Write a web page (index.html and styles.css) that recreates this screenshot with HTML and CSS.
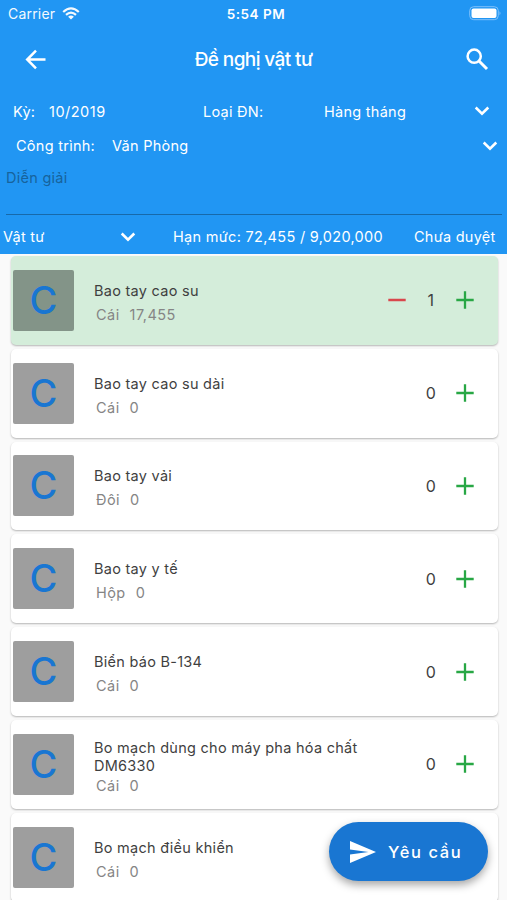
FILE: index.html
```html
<!DOCTYPE html>
<html lang="vi">
<head>
<meta charset="utf-8">
<title>Đề nghị vật tư</title>
<link rel="stylesheet" href="styles.css">
</head>
<body>
<svg width="0" height="0" class="defs">
  <symbol id="chevron" viewBox="0 0 16 10"><path d="M1.700 1.500 8 7.600l6.300-6.100" fill="none" stroke="#fff" stroke-width="2.600"/></symbol>
  <symbol id="plus" viewBox="0 0 18 18"><path d="M9 .3v17.400M.3 9h17.400" fill="none" stroke="#28a745" stroke-width="2.300"/></symbol>
  <symbol id="minus" viewBox="0 0 18 18"><path d="M.3 9h17.400" fill="none" stroke="#d9474c" stroke-width="2.500"/></symbol>
</svg>
<header class="header">
  <div class="status">
    <div class="carrier"><span>Carrier</span>
      <svg width="18" height="13" viewBox="0 0 18 13"><g fill="none" stroke="#fff" stroke-width="2.200"><path d="M1.200 5Q9-2.200 16.800 5"/><path d="M4 7.900Q9 3.300 14 7.900"/></g><path d="M9 12.500 6.100 9.700Q9 7.400 11.900 9.700Z" fill="#fff"/></svg>
    </div>
    <span class="time">5:54 PM</span>
    <svg class="battery" width="33" height="15" viewBox="0 0 33 15"><rect x=".7" y=".7" width="28.600" height="13" rx="4" fill="none" stroke="#7fc1fa" stroke-width="1"/><rect x="2.500" y="2.500" width="25" height="9.500" rx="2" fill="#fff"/><path d="M30.500 5.200q2 2 0 4Z" fill="#7fc1fa"/></svg>
  </div>
  <div class="appbar">
    <svg width="22" height="22" viewBox="0 0 22 22"><path d="M20.500 10.500H3M11 1.700 2.200 10.500l8.800 8.800" fill="none" stroke="#fff" stroke-width="2.500"/></svg>
    <h1 class="title">Đề nghị vật tư</h1>
    <svg width="23" height="23" viewBox="0 0 23 23"><circle cx="8.200" cy="8.200" r="6.600" fill="none" stroke="#fff" stroke-width="2.500"/><path d="m13 13 8 8" stroke="#fff" stroke-width="3"/></svg>
  </div>
  <div class="row period"><span class="period-label">Kỳ:</span><span class="period-value">10/2019</span><span class="type-label">Loại ĐN:</span><span class="type-value">Hàng tháng</span><svg class="chev"><use href="#chevron"/></svg></div>
  <div class="row project"><span class="project-label">Công trình:</span><span class="project-value">Văn Phòng</span><svg class="chev"><use href="#chevron"/></svg></div>
  <div class="note">Diễn giải</div>
  <div class="row summary"><span class="kind">Vật tư</span><svg class="chev"><use href="#chevron"/></svg><span class="limit">Hạn mức: 72,455 / 9,020,000</span><span class="state">Chưa duyệt</span></div>
</header>
<main class="list">
  <article class="card selected"><div class="thumb">C</div><div class="info"><div class="name">Bao tay cao su</div><div class="meta"><span>Cái</span><span>17,455</span></div></div><svg class="op"><use href="#minus"/></svg><span class="qty">1</span><svg class="op"><use href="#plus"/></svg></article>
  <article class="card"><div class="thumb">C</div><div class="info"><div class="name">Bao tay cao su dài</div><div class="meta"><span>Cái</span><span>0</span></div></div><span class="qty">0</span><svg class="op"><use href="#plus"/></svg></article>
  <article class="card"><div class="thumb">C</div><div class="info"><div class="name">Bao tay vải</div><div class="meta"><span>Đôi</span><span>0</span></div></div><span class="qty">0</span><svg class="op"><use href="#plus"/></svg></article>
  <article class="card"><div class="thumb">C</div><div class="info"><div class="name">Bao tay y tế</div><div class="meta"><span>Hộp</span><span>0</span></div></div><span class="qty">0</span><svg class="op"><use href="#plus"/></svg></article>
  <article class="card"><div class="thumb">C</div><div class="info"><div class="name">Biển báo B-134</div><div class="meta"><span>Cái</span><span>0</span></div></div><span class="qty">0</span><svg class="op"><use href="#plus"/></svg></article>
  <article class="card"><div class="thumb">C</div><div class="info long"><div class="name">Bo mạch dùng cho máy pha hóa chất<br>DM6330</div><div class="meta"><span>Cái</span><span>0</span></div></div><span class="qty">0</span><svg class="op"><use href="#plus"/></svg></article>
  <article class="card"><div class="thumb">C</div><div class="info"><div class="name">Bo mạch điều khiển</div><div class="meta"><span>Cái</span><span>0</span></div></div></article>
</main>
<button class="request"><svg width="26" height="22" viewBox="0 0 26 22"><path d="M0 0 26 11 0 22V13.500L18.500 11 0 8.500Z" fill="#fff"/></svg><span>Yêu cầu</span></button>
</body>
</html>
```
FILE: styles.css
```css
* { box-sizing: border-box; }
body {
  margin: 0;
  height: 900px;
  overflow: hidden;
  background: #fafafa;
  font-family: Inter, "Liberation Sans", sans-serif;
  font-size: 14.500px;
  letter-spacing: .27px;
  color: #3f3f3f;
}
.defs { position: absolute; }
svg { display: block; flex: none; }
span { white-space: nowrap; }
.header { height: 254px; background: #2196f3; color: #fff; }
.status {
  display: grid;
  grid-template-columns: 1fr auto 1fr;
  align-items: center;
  height: 27px;
  padding: 0 5px 0 8px;
  font-size: 14px;
}
.carrier { display: flex; align-items: center; gap: 7px; letter-spacing: .2px; opacity: .95; }
.time { padding-left: 2px; font-weight: 600; font-size: 13.500px; letter-spacing: .55px; }
.battery { justify-self: end; }
.appbar {
  display: flex;
  align-items: center;
  justify-content: space-between;
  height: 65px;
  padding: 0 18px 0 25px;
}
.title { margin: 0 6px 0 0; font-size: 19px; font-weight: 500; letter-spacing: -.6px; }
.row { display: flex; align-items: center; }
.chev { width: 16px; height: 10px; }
.period { height: 38px; padding: 0 17px 0 13px; }
.period-label { width: 36px; }
.period-value { width: 154px; letter-spacing: .5px; }
.type-label { width: 121px; }
.period .chev, .project .chev { margin-left: auto; }
.project { height: 31px; padding: 0 9px 0 16px; }
.project-label { width: 96px; }
.note {
  height: 54px;
  margin: 0 5px 0 6px;
  padding-top: 8px;
  border-bottom: 1px solid #1769aa;
  line-height: 18px;
  color: #17639c;
}
.summary { height: 43px; padding-left: 3px; }
.kind { width: 117px; }
.limit { width: 241px; margin-left: 37px; letter-spacing: .3px; }
.list {
  display: flex;
  flex-direction: column;
  gap: 4px;
  padding: 2px 9px 0 11px;
}
.card {
  flex: none;
  display: flex;
  align-items: center;
  height: 88.800px;
  padding: 0 24px 0 2px;
  border-radius: 5px;
  background: #fff;
  box-shadow: 0 1px 2px rgba(0, 0, 0, .28);
}
.selected { background: #d4edda; }
.thumb {
  width: 61px;
  height: 61px;
  flex: none;
  border-radius: 2px;
  background: #9e9e9e;
  color: #1976d2;
  font-size: 38px;
  font-weight: 500;
  letter-spacing: 0;
  line-height: 61px;
  text-align: center;
}
.selected .thumb { background: #839488; }
.info { flex: 1; margin-left: 20px; padding-top: 5px; }
.name { line-height: 18px; white-space: nowrap; }
.meta { display: flex; gap: 10px; margin: 6px 0 0 2px; line-height: 18px; letter-spacing: .45px; color: #858585; }
.long .meta { margin-top: 2px; }
.qty { width: 32px; margin: 0 9px; text-align: center; font-size: 16px; }
.op { width: 18px; height: 18px; }
.request {
  position: absolute;
  left: 329px;
  top: 822px;
  display: flex;
  align-items: center;
  gap: 12px;
  width: 159px;
  height: 59px;
  padding: 0 0 0 21px;
  border: 0;
  border-radius: 30px;
  background: #1976d2;
  box-shadow: 0 4px 8px rgba(0, 0, 0, .35);
  color: #fff;
  font: 500 16.500px Inter, "Liberation Sans", sans-serif;
  letter-spacing: 1.600px;
}
```
